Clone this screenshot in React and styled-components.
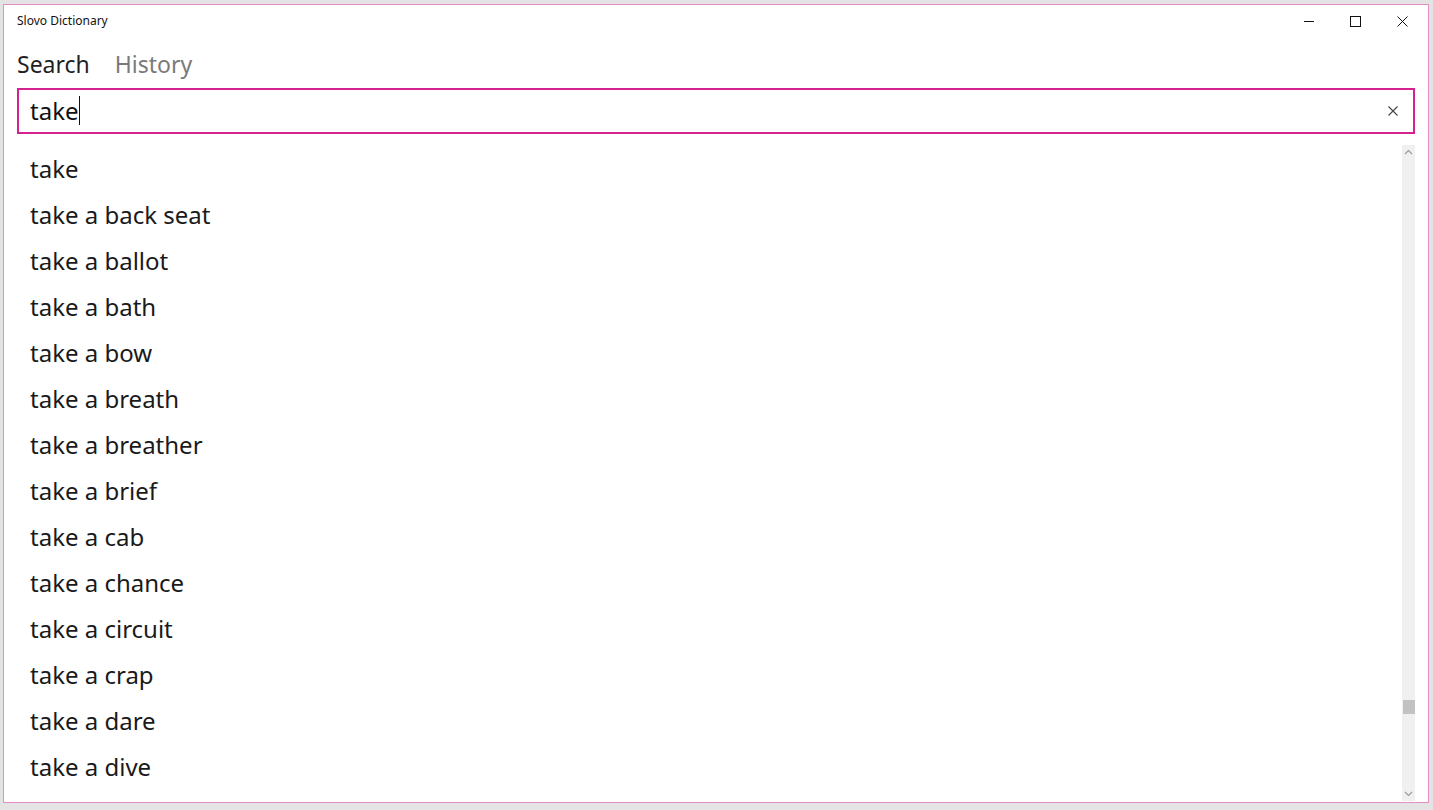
import React from 'react'
import styled, { createGlobalStyle } from 'styled-components'

const GlobalStyle = createGlobalStyle`
  html, body {
    margin: 0;
    padding: 0;
    background: #e4e4e4;
    font-family: "Noto Sans", "Open Sans", sans-serif;
  }
  body {
    overflow: hidden;
  }
`

const Window = styled.div`
  box-sizing: border-box;
  margin: 4px 0 0 3px;
  width: 1426px;
  height: 799px;
  border: 1px solid #e38ec6;
  background: #fff;
  display: flex;
  flex-direction: column;
  overflow: hidden;
`

const TitleBar = styled.div`
  height: 32px;
  display: flex;
  align-items: center;
  justify-content: space-between;
  flex-shrink: 0;
`

const Title = styled.div`
  padding-left: 13px;
  font-size: 12px;
  color: #111;
  margin-top: -1px;
`

const Controls = styled.div`
  display: flex;
  height: 100%;
  padding-right: 2px;
`

const ControlButton = styled.div`
  width: 47px;
  height: 100%;
  display: flex;
  align-items: center;
  justify-content: center;
  svg {
    display: block;
  }
`

const Main = styled.div`
  flex: 1;
  min-height: 0;
  display: flex;
  flex-direction: column;
  padding: 0 13px;
`

const Tabs = styled.div`
  display: flex;
  gap: 25px;
  padding: 11px 0 8px;
  flex-shrink: 0;
`

const Tab = styled.div`
  font-size: 23px;
  line-height: 32px;
  color: ${p => (p.active ? '#1f1f1f' : '#7a7a7a')};
`

const SearchBox = styled.div`
  box-sizing: border-box;
  height: 46px;
  border: 2px solid #d4228e;
  display: flex;
  align-items: center;
  padding: 0 13px 2px 11px;
  flex-shrink: 0;
`

const Query = styled.div`
  flex: 1;
  font-size: 24px;
  color: #111;
  display: flex;
  align-items: center;
`

const Caret = styled.span`
  display: inline-block;
  width: 1px;
  height: 29px;
  background: #111;
  margin-left: 1px;
`

const ClearButton = styled.div`
  width: 14px;
  height: 14px;
  margin-top: 2px;
  display: flex;
  align-items: center;
  justify-content: center;
`

const Body = styled.div`
  flex: 1;
  min-height: 0;
  display: flex;
`

const List = styled.div`
  flex: 1;
  overflow: hidden;
  padding: 12px 0 0 13px;
`

const Item = styled.div`
  height: 46px;
  line-height: 46px;
  font-size: 24px;
  color: #1a1a1a;
  white-space: nowrap;
`

const ScrollTrack = styled.div`
  width: 13px;
  margin: 11px 0 1px;
  background: #f0f0f0;
  display: flex;
  flex-direction: column;
  align-items: center;
  justify-content: space-between;
  position: relative;
`

const Arrow = styled.div`
  height: 14px;
  display: flex;
  align-items: center;
  justify-content: center;
`

const Thumb = styled.div`
  position: absolute;
  left: 1px;
  right: 0;
  top: 555px;
  height: 14px;
  background: #c2c2c2;
`

const words = [
  'take',
  'take a back seat',
  'take a ballot',
  'take a bath',
  'take a bow',
  'take a breath',
  'take a breather',
  'take a brief',
  'take a cab',
  'take a chance',
  'take a circuit',
  'take a crap',
  'take a dare',
  'take a dive',
]

const App = () => {
  return (
    <>
      <GlobalStyle />
      <Window>
        <TitleBar>
          <Title>Slovo Dictionary</Title>
          <Controls>
            <ControlButton>
              <svg width="10" height="10" viewBox="0 0 10 10">
                <path d="M0 5.5h10" stroke="#111" strokeWidth="1" />
              </svg>
            </ControlButton>
            <ControlButton>
              <svg width="11" height="11" viewBox="0 0 11 11">
                <rect x="0.5" y="0.5" width="10" height="10" fill="none" stroke="#111" strokeWidth="1" />
              </svg>
            </ControlButton>
            <ControlButton>
              <svg width="11" height="11" viewBox="0 0 11 11">
                <path d="M0.5 0.5l10 10M10.5 0.5l-10 10" stroke="#111" strokeWidth="1" />
              </svg>
            </ControlButton>
          </Controls>
        </TitleBar>
        <Main>
          <Tabs>
            <Tab active>Search</Tab>
            <Tab>History</Tab>
          </Tabs>
          <SearchBox>
            <Query>
              take
              <Caret />
            </Query>
            <ClearButton>
              <svg width="10" height="10" viewBox="0 0 10 10">
                <path d="M0.5 0.5l9 9M9.5 0.5l-9 9" stroke="#444" strokeWidth="1.1" />
              </svg>
            </ClearButton>
          </SearchBox>
          <Body>
            <List>
              {words.map((w, idx) => (
                <Item key={idx}>{w}</Item>
              ))}
            </List>
            <ScrollTrack>
              <Arrow>
                <svg width="9" height="6" viewBox="0 0 9 6">
                  <path d="M1 5l3.5-3.5L8 5" fill="none" stroke="#9a9a9a" strokeWidth="1.2" />
                </svg>
              </Arrow>
              <Thumb />
              <Arrow>
                <svg width="9" height="6" viewBox="0 0 9 6">
                  <path d="M1 1l3.5 3.5L8 1" fill="none" stroke="#9a9a9a" strokeWidth="1.2" />
                </svg>
              </Arrow>
            </ScrollTrack>
          </Body>
        </Main>
      </Window>
    </>
  )
}

export default App
